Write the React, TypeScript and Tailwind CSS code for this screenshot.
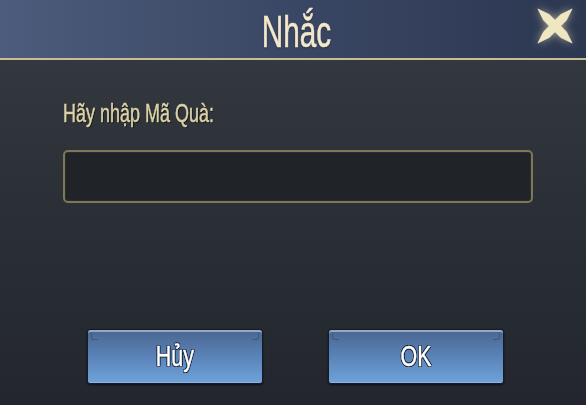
const font = "font-['Liberation_Sans',Arial,sans-serif]";

function CloseIcon() {
  return (
    <svg viewBox="0 0 40 40" className="w-[38px] h-[38px] drop-shadow-[0_0_4px_rgba(255,240,180,0.6)]">
      <polygon
        points="2,2 14,8 20,14 26,8 38,2 32,14 26,20 32,26 38,38 26,32 20,26 14,32 2,38 8,26 14,20 8,14"
        fill="#efe7bf"
        stroke="#fff8dc"
        strokeWidth="0.6"
        strokeLinejoin="round"
      />
    </svg>
  );
}

function GameButton({ label }: { label: string }) {
  return (
    <button className="relative w-[176px] h-[55px] rounded-[3px] border border-[#151b28] bg-gradient-to-b from-[#4a6690] via-[#5a83b8] to-[#6fa3da] shadow-[inset_0_2px_0_#95a8c4,inset_0_-1px_0_#8cb6e2,0_1px_2px_rgba(0,0,0,0.6)] flex items-center justify-center">
      <span className="absolute left-[3px] top-[3px] w-[7px] h-[7px] border-l border-b border-[#3a5070] rounded-bl-[3px] opacity-70" />
      <span className="absolute right-[3px] top-[3px] w-[7px] h-[7px] border-r border-b border-[#3a5070] rounded-br-[3px] opacity-70" />
      <span
        className={`${font} inline-block scale-x-[0.74] text-[29px] leading-none text-white [-webkit-text-stroke:0.5px_#ffffff] [text-shadow:0_0_1px_#142036,1px_1px_0_#142036,-1px_-1px_0_#142036,1px_-1px_0_#142036,-1px_1px_0_#142036,0_1px_0_#142036,0_-1px_0_#142036,1px_0_0_#142036,-1px_0_0_#142036]`}
      >
        {label}
      </span>
    </button>
  );
}

export default function App() {
  return (
    <div className="w-[586px] h-[405px] flex flex-col overflow-hidden bg-gradient-to-b from-[#363c42] via-[#2b3036] to-[#23262e]">
      <header className="relative h-[58px] flex-none flex items-center justify-center bg-gradient-to-r from-[#4d5c7c] via-[#3a4764] to-[#2c3751]">
        <span
          className={`${font} inline-block scale-x-[0.66] text-[45px] leading-none text-[#f3e7cc] pt-[4px] ml-[8px] [-webkit-text-stroke:0.6px_#f3e7cc] [text-shadow:0_1px_2px_rgba(0,0,0,0.5)]`}
        >
          Nhắc
        </span>
        <div className="absolute right-[12px] top-[7px]">
          <CloseIcon />
        </div>
      </header>
      <div className="h-[2px] flex-none bg-[#c9bd98]" />

      <main className="flex-1 flex flex-col px-[63px]">
        <div className="mt-[38px] h-[30px] flex items-center">
          <span
            className={`${font} inline-block origin-left scale-x-[0.72] text-[25px] leading-[30px] text-[#dcd2a8] whitespace-nowrap [-webkit-text-stroke:0.5px_#dcd2a8] [text-shadow:1px_1px_1px_rgba(0,0,0,0.8)]`}
          >
            Hãy nhập Mã Quà:
          </span>
        </div>

        <div className="mt-[22px] w-[470px] h-[53px] rounded-[5px] border-2 border-[#7f7759] bg-[#202328] shadow-[inset_0_0_0_1px_#2a2c2c]" />

        <div className="mt-[126px] flex gap-[65px] pl-[24px]">
          <GameButton label="Hủy" />
          <GameButton label="OK" />
        </div>
      </main>
    </div>
  );
}
